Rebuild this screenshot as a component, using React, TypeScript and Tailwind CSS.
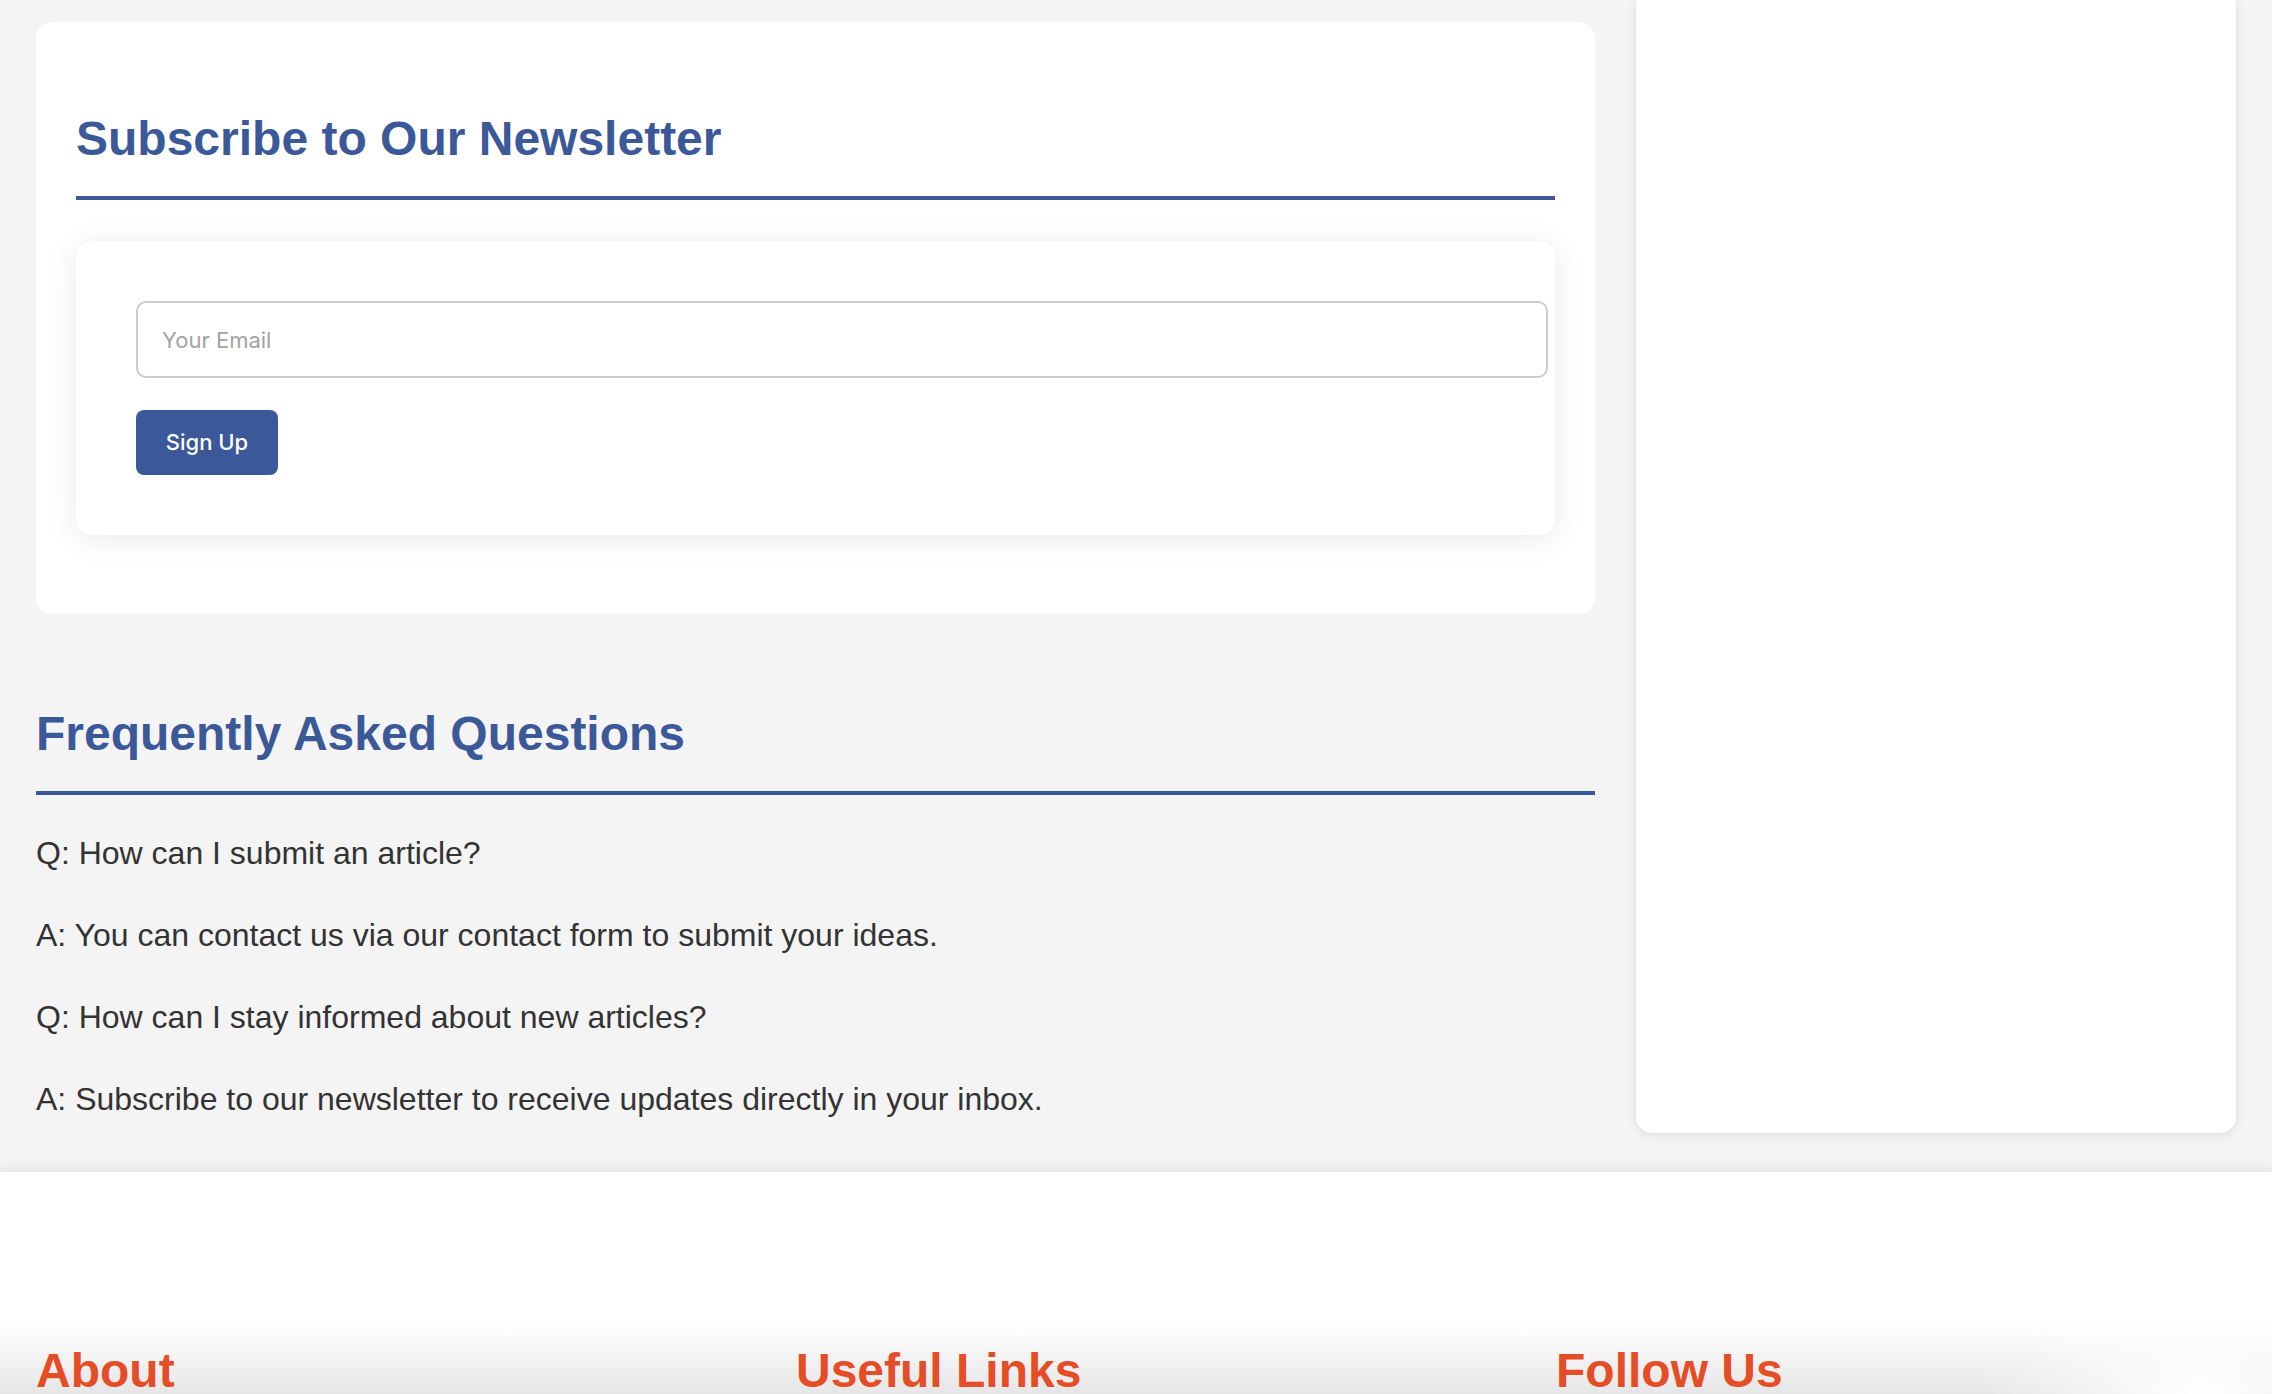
const faq = [
    'Q: How can I submit an article?',
    'A: You can contact us via our contact form to submit your ideas.',
    'Q: How can I stay informed about new articles?',
    'A: Subscribe to our newsletter to receive updates directly in your inbox.',
];

function SectionTitle({ children }: { children: React.ReactNode }) {
    return (
        <h2 className="border-b-4 border-[#3b5998] pb-[30px] text-[48px] leading-[55px] font-bold text-[#3b5998]">
            {children}
        </h2>
    );
}

function Newsletter() {
    return (
        <section className="mt-[22px] h-[592px] rounded-[16px] bg-white px-[40px] pt-[89px]">
            <SectionTitle>Subscribe to Our Newsletter</SectionTitle>
            <div className="mt-[41px] h-[294px] rounded-[16px] bg-white px-[60px] pt-[60px] shadow-[0_4px_32px_rgba(0,0,0,0.09)]">
                <input
                    type="email"
                    placeholder="Your Email"
                    className="block h-[77px] w-[1412px] rounded-[10px] border-2 border-[#cccccc] bg-white px-[24px] font-['Inter',sans-serif] text-[22px] text-[#333] outline-none placeholder:text-[#a3a3a3]"
                />
                <button className="mt-[32px] h-[65px] w-[142px] rounded-[8px] bg-[#3b5998] font-['Inter',sans-serif] text-[22px] font-medium text-white">
                    Sign Up
                </button>
            </div>
        </section>
    );
}

function Faq() {
    return (
        <section className="mt-[92px]">
            <SectionTitle>Frequently Asked Questions</SectionTitle>
            <div className="mt-[33px] flex flex-col gap-[32px]">
                {faq.map((line) => (
                    <p key={line} className="text-[32px] leading-[50px] text-[#333]">
                        {line}
                    </p>
                ))}
            </div>
        </section>
    );
}

export default function App() {
    return (
        <div className="h-[1394px] overflow-hidden bg-[#f4f4f4] font-['Liberation_Sans',Arial,sans-serif] text-[#333]">
            <div className="flex h-[1172px] items-start gap-[41px] px-[36px]">
                <main className="w-[1559px] shrink-0">
                    <Newsletter />
                    <Faq />
                </main>
                <aside className="h-[1133px] w-[600px] shrink-0 rounded-b-[16px] bg-white shadow-[0_2px_10px_rgba(0,0,0,0.1)]" />
            </div>
            <footer className="relative z-10 grid h-[222px] grid-cols-3 gap-[80px] bg-[radial-gradient(ellipse_220px_110px_at_2200px_100%,#ffffff_0%,rgba(255,255,255,0)_100%),linear-gradient(to_bottom,#ffffff_0%,#ffffff_68%,#e6e6e6_100%)] px-[36px] pt-[171px] shadow-[0_-3px_12px_rgba(0,0,0,0.08)]">
                <h3 className="text-[48px] leading-[55px] font-bold text-[#e44d26]">About</h3>
                <h3 className="text-[48px] leading-[55px] font-bold text-[#e44d26]">Useful Links</h3>
                <h3 className="text-[48px] leading-[55px] font-bold text-[#e44d26]">Follow Us</h3>
            </footer>
        </div>
    );
}
